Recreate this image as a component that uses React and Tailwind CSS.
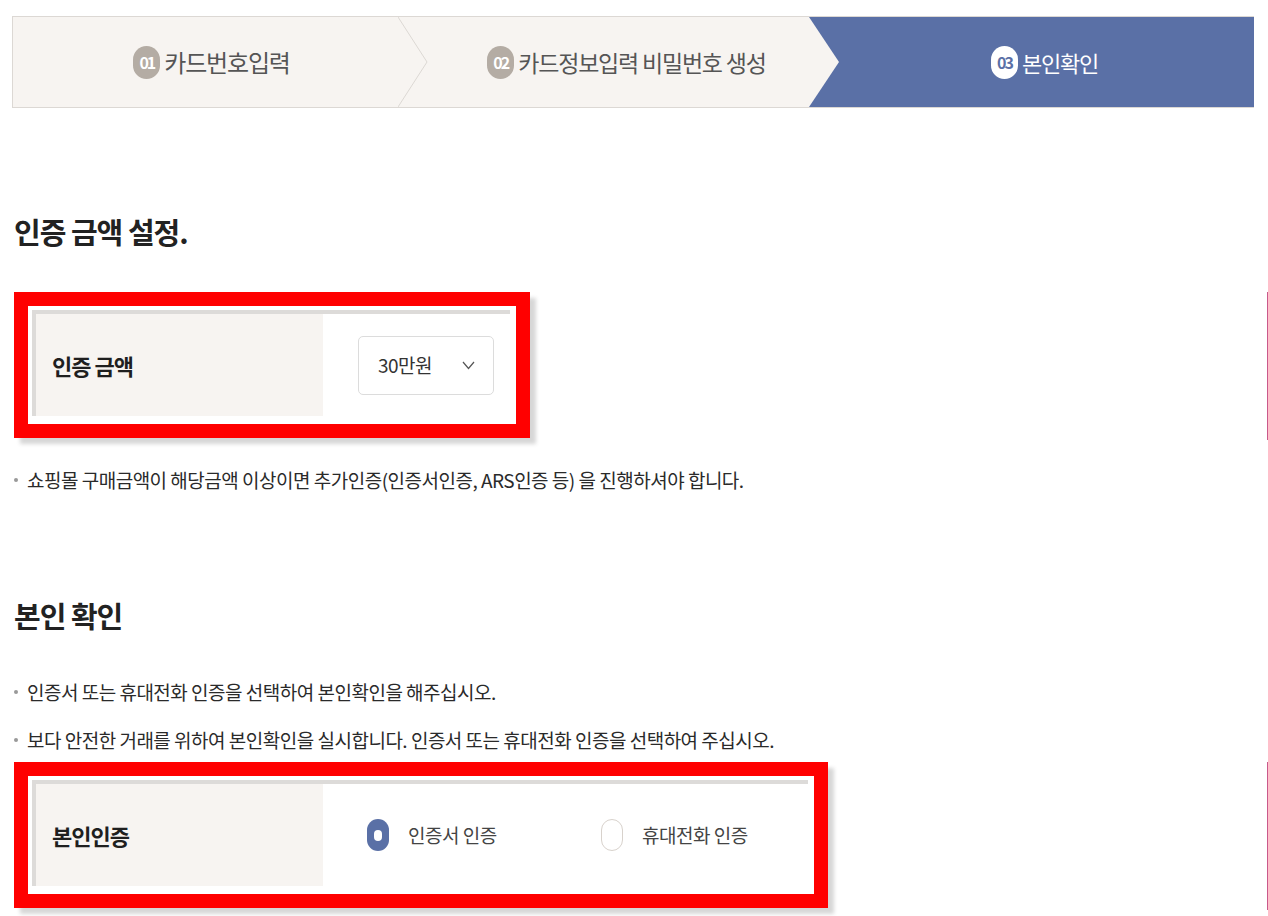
import React from 'react';

const StepNum = ({ num, active }) => (
  <span
    className={`w-[27px] h-[33px] rounded-full flex items-center justify-center text-[16px] font-semibold tracking-[-2px] ${
      active ? 'bg-white text-[#5a70a6]' : 'bg-[#b4aca4] text-white'
    }`}
  >
    {num}
  </span>
);

const Steps = () => (
  <div className="ml-[12px] mt-[16px] w-[1242px] h-[92px] flex border-y border-l border-[#dcd8d4] bg-[#f7f4f1]">
    <div className="w-[385px] flex items-center justify-center gap-[4px] pl-[12px]">
      <StepNum num="01" />
      <span className="text-[24px] tracking-[-1.2px] text-[#555]">카드번호입력</span>
    </div>
    <svg width="30" height="90" viewBox="0 0 30 90" className="shrink-0">
      <polyline points="0,0 29,45 0,90" fill="none" stroke="#dcd8d4" strokeWidth="1" />
    </svg>
    <div className="w-[381px] flex items-center justify-center gap-[4px] pl-[16px]">
      <StepNum num="02" />
      <span className="text-[23px] tracking-[-1.2px] text-[#555]">카드정보입력 비밀번호 생성</span>
    </div>
    <svg width="30" height="90" viewBox="0 0 30 90" className="shrink-0 bg-[#5a70a6]">
      <polygon points="0,0 30,45 0,90" fill="#f7f4f1" />
    </svg>
    <div className="flex-1 bg-[#5a70a6] flex items-center justify-center gap-[4px] pr-[4px]">
      <StepNum num="03" active />
      <span className="text-[22px] tracking-[-1.2px] text-white">본인확인</span>
    </div>
  </div>
);

const Bullet = ({ children, className = '' }) => (
  <p className={`flex items-center gap-[9px] pl-[14px] h-[24px] text-[19px] tracking-[-0.5px] text-[#2a2a2a] ${className}`}>
    <span className="w-[4px] h-[4px] bg-[#999] rounded-full"></span>
    <span>{children}</span>
  </p>
);

const FormBox = ({ width, label, children }) => (
  <div className="flex justify-between">
    <div
      className={`${width} ml-[14px] h-[146px] border-[14px] border-[#ff0000] bg-white pt-[4px] pl-[4px] pr-[6px] pb-[8px] shadow-[6px_6px_4px_rgba(0,0,0,0.16)]`}
    >
      <div className="h-full border-t-4 border-l-4 border-[#dddbd9] flex">
        <div className="w-[287px] shrink-0 bg-[#f7f4f1] flex items-center pl-[16px] text-[22px] font-bold tracking-[-1px] text-[#1f1f1f]">
          {label}
        </div>
        <div className="flex-1 flex items-center">{children}</div>
      </div>
    </div>
    <div className="w-px h-[148px] bg-[#c9588a]"></div>
  </div>
);

const Radio = ({ checked, label }) => (
  <label className="w-[234px] flex items-center gap-[19px]">
    {checked ? (
      <span className="w-[22px] h-[32px] rounded-full bg-[#5a70a6] flex items-center justify-center">
        <span className="w-[8px] h-[11px] rounded-full bg-white"></span>
      </span>
    ) : (
      <span className="w-[22px] h-[32px] rounded-full border border-[#d8d2cc] bg-white"></span>
    )}
    <span className="text-[19px] tracking-[-0.5px] text-[#444]">{label}</span>
  </label>
);

export default function App() {
  return (
    <div className="w-[1268px] h-[916px] bg-white overflow-hidden font-['Noto_Sans_CJK_KR','Noto_Sans',sans-serif]">
      <Steps />

      <h2 className="mt-[105px] ml-[14px] h-[36px] leading-[36px] text-[29px] font-bold tracking-[-1px] text-[#222]">
        인증 금액 설정.
      </h2>

      <div className="mt-[43px]">
        <FormBox width="w-[516px]" label="인증 금액">
          <div className="ml-[35px] w-[136px] h-[59px] border border-[#dcdcdc] rounded-[5px] flex items-center justify-between pl-[19px] pr-[18px]">
            <span className="text-[19px] tracking-[-0.5px] text-[#333]">30만원</span>
            <svg width="13" height="9" viewBox="0 0 13 9">
              <polyline points="1,1 6.5,7.5 12,1" fill="none" stroke="#555" strokeWidth="1.2" />
            </svg>
          </div>
        </FormBox>
      </div>

      <Bullet className="mt-[28px]">
        쇼핑몰 구매금액이 해당금액 이상이면 추가인증(인증서인증, ARS인증 등) 을 진행하셔야 합니다.
      </Bullet>

      <h2 className="mt-[105px] ml-[14px] h-[36px] leading-[36px] text-[29px] font-bold tracking-[-1px] text-[#222]">
        본인 확인
      </h2>

      <Bullet className="mt-[47px]">인증서 또는 휴대전화 인증을 선택하여 본인확인을 해주십시오.</Bullet>
      <Bullet className="mt-[24px]">
        보다 안전한 거래를 위하여 본인확인을 실시합니다. 인증서 또는 휴대전화 인증을 선택하여 주십시오.
      </Bullet>

      <div className="mt-[10px]">
        <FormBox width="w-[814px]" label="본인인증">
          <div className="pl-[44px] flex items-center">
            <Radio checked label="인증서 인증" />
            <Radio label="휴대전화 인증" />
          </div>
        </FormBox>
      </div>
    </div>
  );
}
